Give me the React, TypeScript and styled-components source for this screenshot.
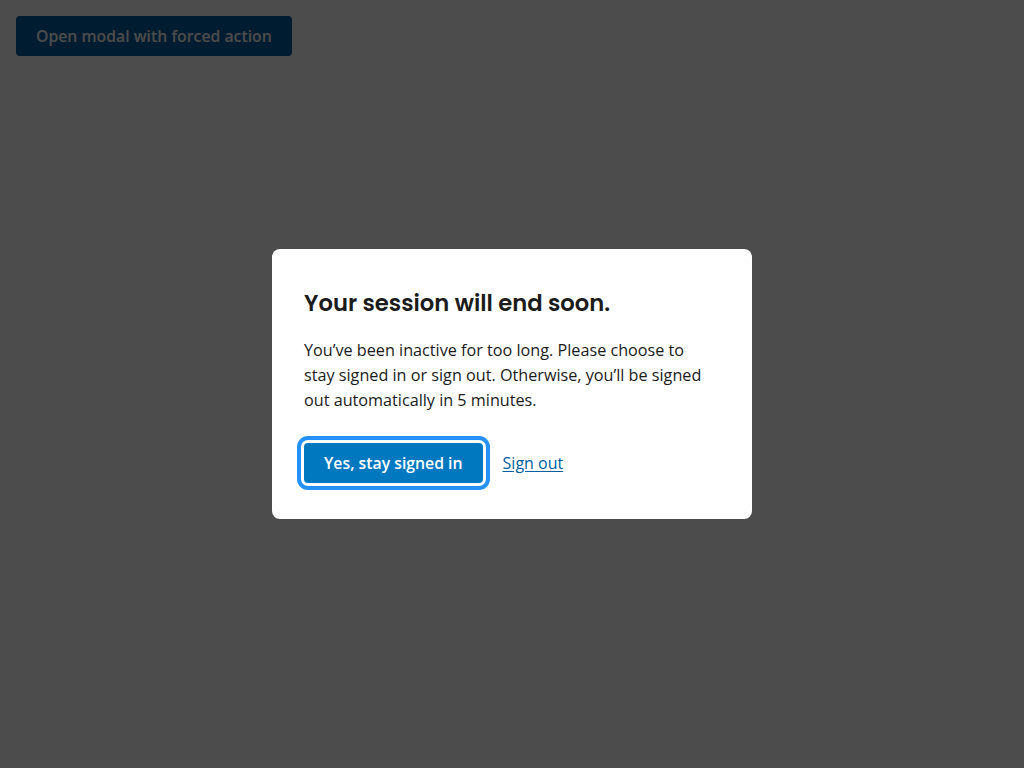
import React from 'react';
import styled, { createGlobalStyle } from 'styled-components';

const GlobalStyle = createGlobalStyle`
  html, body {
    margin: 0;
    padding: 0;
    height: 100%;
    background: #ffffff;
    font-family: "Open Sans", "Noto Sans", sans-serif;
  }
  #root {
    min-height: 100%;
  }
`;

const Page = styled.div`
  padding: 16px;
`;

const Trigger = styled.button`
  display: inline-flex;
  align-items: center;
  height: 40px;
  padding: 0 20px;
  border: 0;
  border-radius: 4px;
  background: #005ea2;
  color: #ffffff;
  font-family: "Open Sans", sans-serif;
  font-size: 15.8px;
  font-weight: 600;
  cursor: pointer;
`;

const Overlay = styled.div`
  position: fixed;
  inset: 0;
  background: rgba(0, 0, 0, 0.7);
  display: flex;
  align-items: center;
  justify-content: center;
`;

const Dialog = styled.div`
  width: 480px;
  box-sizing: border-box;
  background: #ffffff;
  border-radius: 8px;
  padding: 32px 32px 36px;
`;

const Heading = styled.h2`
  margin: 0 0 21px;
  padding-top: 9px;
  font-family: "Poppins", "Inter", "Noto Sans", sans-serif;
  font-size: 22.7px;
  font-weight: 600;
  line-height: 1.2;
  color: #1b1b1b;
`;

const Body = styled.p`
  max-width: 405px;
  margin: 0 0 30px;
  font-size: 16.2px;
  line-height: 25px;
  color: #1b1b1b;
`;

const Actions = styled.div`
  display: flex;
  align-items: center;
  gap: 20px;
`;

const Primary = styled.button`
  height: 40px;
  padding: 0 20px;
  border: 0;
  border-radius: 4px;
  background: #0078c0;
  color: #ffffff;
  font-family: "Open Sans", sans-serif;
  font-size: 15.8px;
  font-weight: 600;
  outline: 4px solid #2491ff;
  outline-offset: 3px;
  cursor: pointer;
`;

const LinkButton = styled.a`
  font-size: 16px;
  color: #005ea2;
  text-decoration: underline;
  text-underline-offset: 2px;
  cursor: pointer;
`;

export default function App() {
  return (
    <>
      <GlobalStyle />
      <Page>
        <Trigger>Open modal with forced action</Trigger>
      </Page>
      <Overlay>
        <Dialog role="dialog" aria-modal="true">
          <Heading>Your session will end soon.</Heading>
          <Body>
            You’ve been inactive for too long. Please choose to stay signed in or sign out. Otherwise, you’ll be signed out automatically in 5 minutes.
          </Body>
          <Actions>
            <Primary>Yes, stay signed in</Primary>
            <LinkButton>Sign out</LinkButton>
          </Actions>
        </Dialog>
      </Overlay>
    </>
  );
}
